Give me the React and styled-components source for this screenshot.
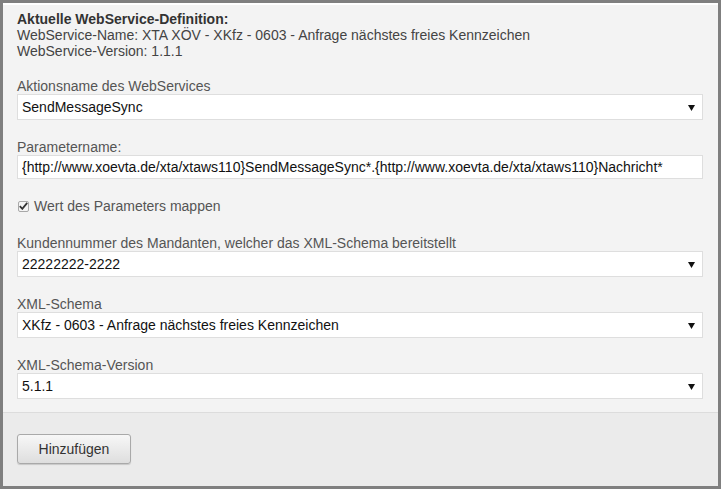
import styled, { createGlobalStyle } from "styled-components";

const GlobalStyle = createGlobalStyle`
  html, body {
    margin: 0;
    padding: 0;
    background: #7f7f7f;
  }
  body {
    font-family: "Liberation Sans", Arial, sans-serif;
    font-size: 14px;
  }
`;

const fields = [
  { label: "Kundennummer des Mandanten, welcher das XML-Schema bereitstellt", value: "22222222-2222" },
  { label: "XML-Schema", value: "XKfz - 0603 - Anfrage nächstes freies Kennzeichen" },
  { label: "XML-Schema-Version", value: "5.1.1" },
];

const Arrow = () => (
  <ArrowIcon width="7" height="6" viewBox="0 0 7 6">
    <path d="M0 0 H7 L3.5 6 Z" fill="#111" />
  </ArrowIcon>
);

const SelectField = ({ value }) => (
  <SelectWrap>
    <Select value={value} onChange={() => {}}>
      <option>{value}</option>
    </Select>
    <Arrow />
  </SelectWrap>
);

const App = () => {
  return (
    <>
      <GlobalStyle />
      <Frame>
        <Panel>
          <Definition>
            <DefTitle>Aktuelle WebService-Definition:</DefTitle>
            <DefLine>WebService-Name: XTA XÖV - XKfz - 0603 - Anfrage nächstes freies Kennzeichen</DefLine>
            <DefLine>WebService-Version: 1.1.1</DefLine>
          </Definition>

          <Group>
            <Label>Aktionsname des WebServices</Label>
            <SelectField value="SendMessageSync" />
          </Group>

          <Group>
            <Label>Parametername:</Label>
            <TextInput
              readOnly
              value="{http://www.xoevta.de/xta/xtaws110}SendMessageSync*.{http://www.xoevta.de/xta/xtaws110}Nachricht*"
            />
          </Group>

          <CheckRow>
            <CheckBox>
              <svg width="9" height="8" viewBox="0 0 9 8">
                <path d="M0.8 4.2 L3.3 6.8 L8.2 0.9" fill="none" stroke="#333" strokeWidth="1.8" />
              </svg>
            </CheckBox>
            Wert des Parameters mappen
          </CheckRow>

          {fields.map((f) => (
            <Group key={f.label}>
              <Label>{f.label}</Label>
              <SelectField value={f.value} />
            </Group>
          ))}
        </Panel>
        <Footer>
          <Button>Hinzufügen</Button>
        </Footer>
      </Frame>
    </>
  );
};

export default App;

const Frame = styled.div`
  margin: 3px;
  width: 715px;
  height: 483px;
  background: #f3f3f3;
  border-top: 2px solid #ffffff;
  box-sizing: border-box;
  display: flex;
  flex-direction: column;
`;

const Panel = styled.div`
  padding: 6px 15px 0 14px;
  height: 408px;
  box-sizing: border-box;
  border-bottom: 1px solid #dcdcdc;
`;

const Definition = styled.div`
  color: #444;
  line-height: 16px;
  margin-bottom: 19px;
`;

const DefTitle = styled.div`
  font-weight: bold;
  color: #333;
`;

const DefLine = styled.div``;

const Group = styled.div`
  margin-bottom: 19px;
  display: flex;
  flex-direction: column;
`;

const Label = styled.label`
  color: #555;
  line-height: 16px;
`;

const SelectWrap = styled.div`
  position: relative;
  height: 26px;
`;

const Select = styled.select`
  appearance: none;
  width: 100%;
  height: 26px;
  box-sizing: border-box;
  border: 1px solid #dedede;
  border-radius: 0;
  background: #fff;
  padding: 0 20px 0 4px;
  font-family: "Liberation Sans", Arial, sans-serif;
  font-size: 14px;
  color: #111;
  outline: none;
`;

const ArrowIcon = styled.svg`
  position: absolute;
  right: 8px;
  top: 11px;
  pointer-events: none;
`;

const TextInput = styled.input`
  width: 100%;
  height: 24px;
  box-sizing: border-box;
  border: 1px solid #dedede;
  background: #fff;
  padding: 0 4px;
  font-family: "Liberation Sans", Arial, sans-serif;
  font-size: 14px;
  color: #111;
  outline: none;
`;

const CheckRow = styled.div`
  display: flex;
  align-items: center;
  gap: 5px;
  color: #555;
  font-size: 14px;
  line-height: 16px;
  margin-bottom: 21px;
  padding-left: 1px;
`;

const CheckBox = styled.span`
  width: 11px;
  height: 11px;
  box-sizing: border-box;
  border: 1px solid #a8a8a8;
  border-radius: 2px;
  background: #f4f4f4;
  display: inline-flex;
  align-items: center;
  justify-content: center;
`;

const Footer = styled.div`
  flex: 1;
  background: #ebebeb;
  padding: 21px 14px 0;
`;

const Button = styled.button`
  width: 114px;
  height: 30px;
  border: 1px solid #a9a9a9;
  border-radius: 3px;
  background: linear-gradient(#f7f7f7, #dedede);
  box-shadow: 0 1px 1px rgba(0, 0, 0, 0.15);
  font-family: "Liberation Sans", Arial, sans-serif;
  font-size: 14px;
  color: #333;
`;
